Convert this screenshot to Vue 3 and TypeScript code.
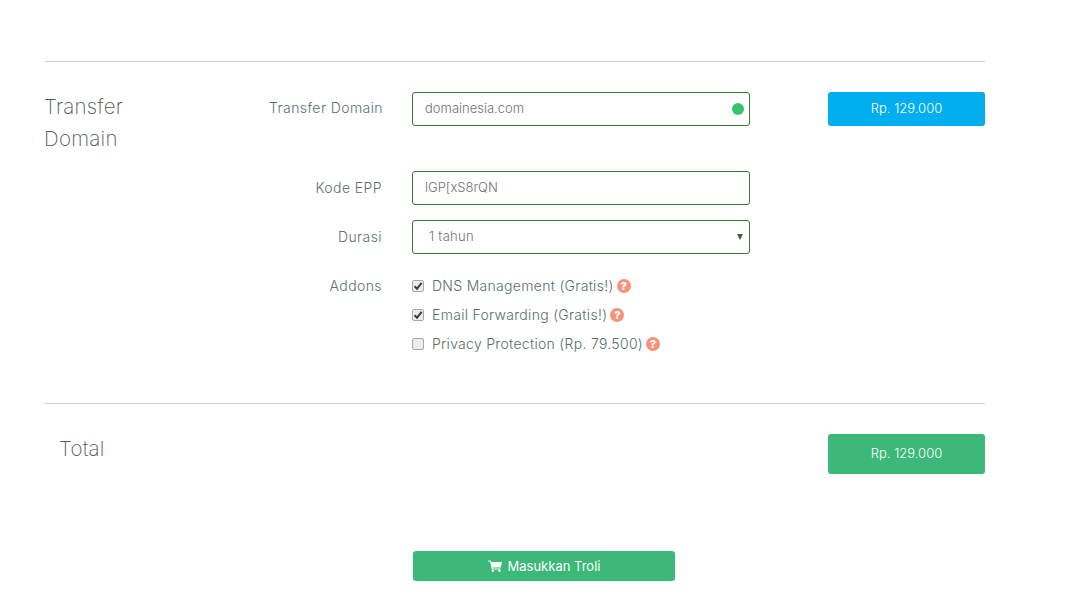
<script setup lang="ts">
interface Addon { label: string; checked: boolean }
const addons: Addon[] = [
  { label: 'DNS Management (Gratis!)', checked: true },
  { label: 'Email Forwarding (Gratis!)', checked: true },
  { label: 'Privacy Protection (Rp. 79.500)', checked: false },
]
</script>

<template>
  <main class="page">
    <section class="order">
      <h2 class="title">Transfer Domain</h2>
      <div class="form">
        <div class="row row-domain">
          <label class="label">Transfer Domain</label>
          <div class="field">
            <input class="control" value="domainesia.com" readonly />
            <span class="dot"></span>
          </div>
        </div>
        <div class="row row-epp">
          <label class="label">Kode EPP</label>
          <div class="field">
            <input class="control" value="lGP[xS8rQN" readonly />
          </div>
        </div>
        <div class="row row-durasi">
          <label class="label">Durasi</label>
          <div class="field">
            <select class="control select">
              <option>1 tahun</option>
            </select>
            <span class="arrow"></span>
          </div>
        </div>
        <div class="row row-addons">
          <span class="label">Addons</span>
          <ul class="addons">
            <li v-for="a in addons" :key="a.label" class="addon">
              <span class="check" :class="{ on: a.checked }">
                <svg v-if="a.checked" viewBox="0 0 12 12" width="12" height="12" aria-hidden="true">
                  <path d="M2.6 6.2 5 8.8 9.6 2.8" fill="none" stroke="#3d3d3d" stroke-width="2" />
                </svg>
              </span>
              <span>{{ a.label }}</span>
              <span class="help">?</span>
            </li>
          </ul>
        </div>
      </div>
      <div class="price price-blue">Rp. 129.000</div>
    </section>

    <section class="total">
      <h2 class="total-title">Total</h2>
      <div class="price price-green">Rp. 129.000</div>
    </section>

    <div class="actions">
      <button class="cart" type="button">
        <svg class="cart-icon" viewBox="0 0 14 12" width="14" height="12" aria-hidden="true">
          <path d="M0 0.6h2.6l.4 1.4H14l-1.2 5.4H4.6l.2 1h7.6v1H3.8L2 1.6H0z" fill="#fff" />
          <circle cx="4.8" cy="10.8" r="1.2" fill="#fff" />
          <circle cx="11.4" cy="10.8" r="1.2" fill="#fff" />
        </svg>
        <span>Masukkan Troli</span>
      </button>
    </div>
  </main>
</template>

<style>
html, body { margin: 0; background: #fff; }
</style>

<style scoped>
.page {
  box-sizing: border-box;
  width: 940px;
  height: 608px;
  margin-left: 45px;
  padding-top: 61px;
  font-family: Inter, "Liberation Sans", sans-serif;
  font-weight: 300;
  color: #5f6b6d;
  overflow: hidden;
}
.order {
  display: grid;
  grid-template-columns: 367px 1fr 157px;
  height: 343px;
  box-sizing: border-box;
  border-top: 1px solid #cccccc;
  border-bottom: 1px solid #cccccc;
}
.title {
  margin: 29px 0 0 -1px;
  width: 110px;
  font-size: 20.5px;
  line-height: 32px;
  font-weight: 200;
  letter-spacing: 0.25px;
  color: #4f5a5e;
}
.form { margin-left: -137px; padding-top: 30px; grid-column: 2; width: 475px; }
.row { display: grid; grid-template-columns: 107px 338px; column-gap: 30px; }
.row-epp { margin-top: 45px; }
.row-durasi { margin-top: 15px; }
.row-addons { margin-top: 20px; }
.label {
  justify-self: end;
  font-size: 14px;
  line-height: 34px;
  letter-spacing: 0.42px;
  color: #5d7074;
  white-space: nowrap;
}
.row-domain .label { line-height: 32px; margin-right: -1px; }
.row-addons .label { line-height: 23px; }
.field { position: relative; height: 34px; }
.control {
  box-sizing: border-box;
  display: block;
  width: 338px;
  height: 34px;
  padding: 0 12px 2px;
  border: 1px solid #3c763d;
  border-radius: 3px;
  background: #fff;
  font: 300 13px Inter, "Liberation Sans", sans-serif;
  color: #6f7474;
  outline: none;
}
.select { appearance: none; padding-left: 16px; letter-spacing: 0.3px; }
.dot {
  position: absolute;
  right: 6px;
  top: 11px;
  width: 12px;
  height: 12px;
  border-radius: 50%;
  background: #36c26e;
}
.arrow {
  position: absolute;
  right: 7px;
  top: 14px;
  border-left: 3.5px solid transparent;
  border-right: 3.5px solid transparent;
  border-top: 6px solid #555;
}
.addons { list-style: none; margin: 0; padding: 0; }
.addon {
  display: flex;
  align-items: center;
  height: 29px;
  font-size: 14px;
  letter-spacing: 0.3px;
  color: #56706a;
  white-space: nowrap;
}
.addon:first-child { margin-top: -3px; }
.check {
  box-sizing: border-box;
  display: block;
  flex: none;
  width: 12px;
  height: 12px;
  margin-right: 8px;
  border: 1px solid #a9a9a9;
  border-radius: 2px;
  background: #ececec;
  overflow: hidden;
}
.check svg { display: block; margin: -1px; }
.help {
  display: inline-flex;
  align-items: center;
  justify-content: center;
  width: 14px;
  height: 14px;
  margin-left: 3px;
  border-radius: 50%;
  background: #f7937a;
  color: #fff;
  font-size: 11px;
  font-weight: 800;
  letter-spacing: 0;
}
.price {
  display: flex;
  align-items: center;
  justify-content: center;
  width: 157px;
  border-radius: 3px;
  color: #fff;
  font-size: 13px;
  font-weight: 300;
}
.price-blue {
  grid-column: 3;
  grid-row: 1;
  height: 34px;
  margin-top: 30px;
  padding-bottom: 2px;
  box-sizing: border-box;
  background: #00aeef;
}
.total { display: flex; justify-content: space-between; padding-top: 30px; }
.total-title {
  margin: 1px 0 0 14px;
  font-size: 20.5px;
  line-height: 28px;
  font-weight: 200;
  letter-spacing: 0.2px;
  color: #4f5a5e;
}
.price-green { height: 40px; padding-bottom: 2px; box-sizing: border-box; background: #3cb878; }
.actions { margin-top: 77px; padding-left: 368px; }
.cart {
  display: flex;
  align-items: center;
  justify-content: center;
  gap: 6px;
  width: 262px;
  height: 30px;
  padding: 0;
  border: none;
  border-radius: 3px;
  background: #3cb878;
  color: #fff;
  font: 400 13px Inter, "Liberation Sans", sans-serif;
}
</style>
